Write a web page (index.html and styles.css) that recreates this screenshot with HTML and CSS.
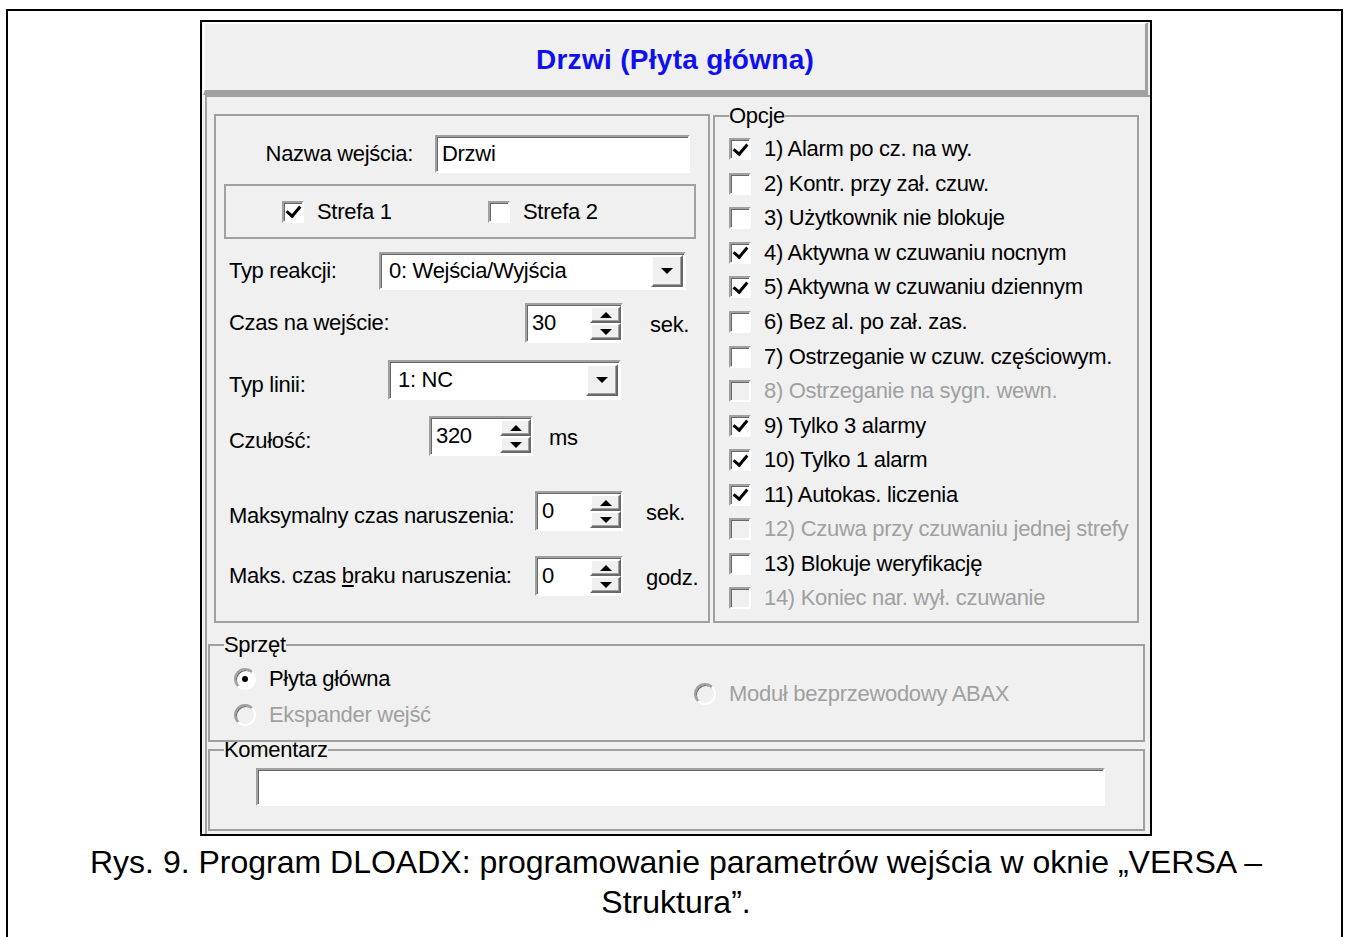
FILE: index.html
```html
<!DOCTYPE html>
<html lang="pl">
  <head>
    <meta charset="UTF-8" />
    <title>Drzwi (Płyta główna)</title>
    <link rel="stylesheet" href="styles.css">
  </head>
  <body>
    <div class="sheet">
      <div class="dialog">
        <div class="title">Drzwi (Płyta główna)</div>
        <div class="body">
          <div class="top-row">
            <div class="group params">
              <div class="row row-name">
                <span class="lbl name-lbl">Nazwa wejścia:</span>
                <div class="field name-field">Drzwi</div>
              </div>
              <div class="group zones">
                <div class="zone"><span class="cb on"></span><span>Strefa 1</span></div>
                <div class="zone"><span class="cb"></span><span>Strefa 2</span></div>
              </div>
              <div class="row row-react">
                <span class="lbl">Typ reakcji:</span>
                <div class="field combo">0: Wejścia/Wyjścia<span class="combo-btn"></span></div>
              </div>
              <div class="row row-entry">
                <span class="lbl">Czas na wejście:</span>
                <div class="field spin">30<span class="spin-btns"><i class="up"></i><i class="down"></i></span></div>
                <span class="unit">sek.</span>
              </div>
              <div class="row row-line">
                <span class="lbl low">Typ linii:</span>
                <div class="field combo">1: NC<span class="combo-btn"></span></div>
              </div>
              <div class="row row-sens">
                <span class="lbl low">Czułość:</span>
                <div class="field spin">320<span class="spin-btns"><i class="up"></i><i class="down"></i></span></div>
                <span class="unit">ms</span>
              </div>
              <div class="row row-max">
                <span class="lbl low">Maksymalny czas naruszenia:</span>
                <div class="field spin">0<span class="spin-btns"><i class="up"></i><i class="down"></i></span></div>
                <span class="unit">sek.</span>
              </div>
              <div class="row row-nomax">
                <span class="lbl">Maks. czas <u>b</u>raku naruszenia:</span>
                <div class="field spin">0<span class="spin-btns"><i class="up"></i><i class="down"></i></span></div>
                <span class="unit">godz.</span>
              </div>
            </div>
            <fieldset class="group options">
              <legend>Opcje</legend>
              <div class="opt-list">
                <div class="opt"><span class="cb on"></span>1) Alarm po cz. na wy.</div>
                <div class="opt"><span class="cb"></span>2) Kontr. przy zał. czuw.</div>
                <div class="opt"><span class="cb"></span>3) Użytkownik nie blokuje</div>
                <div class="opt"><span class="cb on"></span>4) Aktywna w czuwaniu nocnym</div>
                <div class="opt"><span class="cb on"></span>5) Aktywna w czuwaniu dziennym</div>
                <div class="opt"><span class="cb"></span>6) Bez al. po zał. zas.</div>
                <div class="opt"><span class="cb"></span>7) Ostrzeganie w czuw. częściowym.</div>
                <div class="opt dis"><span class="cb"></span>8) Ostrzeganie na sygn. wewn.</div>
                <div class="opt"><span class="cb on"></span>9) Tylko 3 alarmy</div>
                <div class="opt"><span class="cb on"></span>10) Tylko 1 alarm</div>
                <div class="opt"><span class="cb on"></span>11) Autokas. liczenia</div>
                <div class="opt dis"><span class="cb"></span>12) Czuwa przy czuwaniu jednej strefy</div>
                <div class="opt"><span class="cb"></span>13) Blokuje weryfikację</div>
                <div class="opt dis"><span class="cb"></span>14) Koniec nar. wył. czuwanie</div>
              </div>
            </fieldset>
          </div>
          <fieldset class="group hardware">
            <legend>Sprzęt</legend>
            <div class="hw-cols">
              <div class="hw-col">
                <div class="radio"><span class="rb on"></span>Płyta główna</div>
                <div class="radio dis"><span class="rb"></span>Ekspander wejść</div>
              </div>
              <div class="radio dis abax"><span class="rb"></span>Moduł bezprzewodowy ABAX</div>
            </div>
          </fieldset>
          <fieldset class="group comment">
            <legend>Komentarz</legend>
            <div class="field comment-field"></div>
          </fieldset>
        </div>
      </div>
      <p class="caption">Rys. 9. Program DLOADX: programowanie parametrów wejścia w oknie „VERSA –<br>Struktura”.</p>
    </div>
  </body>
</html>
```

FILE: styles.css
```css
* {
  margin: 0;
  padding: 0;
  box-sizing: border-box;
}
body {
  font-family: "Liberation Sans", Arial, sans-serif;
  background-color: #fff;
  overflow: hidden;
}
.sheet {
  margin: 9px 3px 0 6px;
  height: 940px;
  border: 2px solid #000;
  border-bottom: 0;
  padding-top: 9px;
}
.dialog {
  margin-left: 192px;
  width: 952px;
  height: 816px;
  border: 2px solid #000;
  background-color: #f0f0f0;
  font-size: 22px;
  letter-spacing: -0.3px;
  color: #000;
}
.title {
  margin: 0 2px 0 1px;
  height: 73px;
  padding-top: 5px;
  border-style: solid;
  border-width: 2px 3px 5px 2px;
  border-color: #fff #a0a0a0 #a0a0a0 #fff;
  display: flex;
  align-items: center;
  justify-content: center;
  font-weight: bold;
  font-size: 28px;
  letter-spacing: 0.3px;
  color: #1010ee;
}
.body {
  margin-left: 3px;
  height: 739px;
  border-top: 2px solid #a0a0a0;
  border-left: 2px solid #a0a0a0;
}
.top-row {
  display: flex;
  align-items: flex-start;
}
.group {
  border: 2px solid #a0a0a0;
}
fieldset.group legend {
  margin-left: 14px;
  padding: 0;
  line-height: 16px;
}

/* lewa ramka */
.params {
  margin: 17px 0 0 7px;
  width: 496px;
  height: 509px;
}
.row {
  display: flex;
  align-items: center;
  padding-left: 13px;
}
.lbl.low {
  padding-top: 10px;
}
.unit {
  padding-top: 3px;
}
.row-name {
  margin-top: 19px;
  height: 38px;
}
.name-lbl {
  width: 184px;
  text-align: right;
  margin-right: 22px;
}
.name-field {
  width: 255px;
  height: 38px;
}
.zones {
  margin: 11px 0 0 8px;
  width: 472px;
  height: 55px;
  display: flex;
  align-items: center;
  padding-left: 56px;
}
.zone {
  width: 207px;
  display: flex;
  align-items: center;
  gap: 13px;
}
.row-react {
  margin-top: 13px;
  height: 38px;
}
.row-react .lbl {
  width: 150px;
}
.row-react .combo {
  width: 307px;
  height: 38px;
}
.row-entry {
  margin-top: 13px;
  height: 40px;
}
.row-entry .lbl {
  width: 296px;
}
.row-entry .spin {
  width: 98px;
}
.row-entry .unit {
  margin-left: 27px;
}
.row-line {
  margin-top: 17px;
  height: 40px;
}
.row-line .lbl {
  width: 159px;
}
.row-line .combo {
  width: 233px;
  height: 40px;
}
.row-sens {
  margin-top: 16px;
  height: 40px;
}
.row-sens .lbl {
  width: 200px;
}
.row-sens .spin {
  width: 104px;
}
.row-sens .unit {
  margin-left: 16px;
}
.row-max {
  margin-top: 35px;
  height: 40px;
}
.row-nomax {
  margin-top: 25px;
  height: 40px;
}
.row-max .lbl,
.row-nomax .lbl {
  width: 306px;
}
.row-max .spin,
.row-nomax .spin {
  width: 88px;
}
.row-max .unit,
.row-nomax .unit {
  margin-left: 23px;
}

/* pola edycyjne */
.field {
  background-color: #fff;
  border: 2px solid;
  border-color: #a0a0a0 #fff #fff #a0a0a0;
  box-shadow: inset 1px 1px 0 #696969;
  display: flex;
  align-items: center;
  padding-left: 5px;
}
.combo {
  padding-left: 8px;
}
.combo-btn {
  margin: 0 1px 0 auto;
  width: 32px;
  height: 32px;
  background-color: #f0f0f0;
  border: 2px solid;
  border-color: #fff #696969 #696969 #fff;
  box-shadow: inset -1px -1px 0 #a0a0a0;
  display: flex;
  align-items: center;
  justify-content: center;
}
.combo-btn::after {
  content: "";
  border-left: 6px solid transparent;
  border-right: 6px solid transparent;
  border-top: 6px solid #000;
}
.spin {
  height: 40px;
}
.spin-btns {
  margin-left: auto;
  width: 31px;
  height: 34px;
  display: flex;
  flex-direction: column;
}
.spin-btns i {
  flex: 1;
  background-color: #f0f0f0;
  border: 2px solid;
  border-color: #fff #696969 #696969 #fff;
  box-shadow: inset -1px -1px 0 #a0a0a0;
  display: flex;
  align-items: center;
  justify-content: center;
}
.spin-btns i::after {
  content: "";
  border-left: 6px solid transparent;
  border-right: 6px solid transparent;
}
.spin-btns .up::after {
  border-bottom: 6px solid #000;
}
.spin-btns .down::after {
  border-top: 6px solid #000;
}

/* pola wyboru */
.cb {
  flex: none;
  width: 22px;
  height: 22px;
  background-color: #fff;
  border: 2px solid;
  border-color: #a0a0a0 #fff #fff #a0a0a0;
  box-shadow: inset 1px 1px 0 #696969;
  display: flex;
  align-items: center;
  justify-content: center;
}
.cb.on::after {
  content: "";
  width: 6px;
  height: 11px;
  margin-top: -3px;
  border-right: 3px solid #000;
  border-bottom: 3px solid #000;
  transform: rotate(40deg);
}
.dis {
  color: #a0a0a0;
}
.dis .cb,
.dis .rb {
  background-color: #f0f0f0;
}

/* opcje */
.options {
  margin: 11px 0 0 3px;
  width: 426px;
  height: 515px;
}
.opt-list {
  margin-top: 8px;
  padding-left: 14px;
}
.opt {
  height: 34.55px;
  display: flex;
  align-items: center;
  gap: 13px;
  white-space: nowrap;
}

/* sprzęt */
.hardware {
  margin: 14px 0 0 1px;
  width: 937px;
  height: 105px;
}
.hw-cols {
  margin-top: 8px;
  padding-left: 24px;
  display: flex;
  align-items: center;
}
.hw-col {
  width: 460px;
}
.radio {
  height: 36px;
  display: flex;
  align-items: center;
  gap: 13px;
}
.abax {
  margin-top: -6px;
}
.rb {
  flex: none;
  width: 22px;
  height: 22px;
  border-radius: 50%;
  background-color: #fff;
  border: 2px solid;
  border-color: #a0a0a0 #fff #fff #a0a0a0;
  box-shadow: inset 1px 1px 0 #696969;
  display: flex;
  align-items: center;
  justify-content: center;
}
.rb.on::after {
  content: "";
  width: 6px;
  height: 6px;
  border-radius: 50%;
  background-color: #000;
}

/* komentarz */
.comment {
  margin-left: 1px;
  width: 937px;
  height: 89px;
}
.comment-field {
  margin: 10px 0 0 46px;
  width: 849px;
  height: 38px;
}

.caption {
  margin-top: 6px;
  padding-left: 3px;
  text-align: center;
  font-size: 32px;
  line-height: 40px;
}
```
